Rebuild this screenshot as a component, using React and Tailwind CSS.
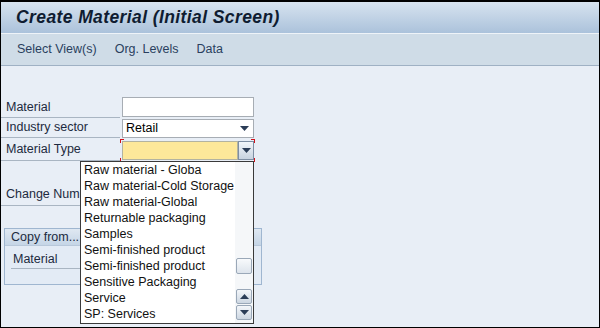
import React from 'react';

const font = { fontFamily: '"Liberation Sans", Arial, sans-serif' };

const Arrow = ({ up = false }) => (
  <svg width="9" height="5" viewBox="0 0 9 5" className={up ? 'rotate-180' : ''}>
    <path d="M0 0 H9 L4.5 5 Z" fill="#2b3d57" />
  </svg>
);

const Label = ({ children, className = '' }) => (
  <div className={`flex items-center border-b border-[#a9b5c2] pl-[5px] text-[12.5px] text-[#1c2a40] ${className}`}>
    {children}
  </div>
);

const options = [
  'Raw material - Globa',
  'Raw material-Cold Storage',
  'Raw material-Global',
  'Returnable packaging',
  'Samples',
  'Semi-finished product',
  'Semi-finished product',
  'Sensitive Packaging',
  'Service',
  'SP: Services',
];

const ScrollBtn = ({ up }) => (
  <div className="flex h-[15px] w-[16px] items-center justify-center rounded-[2px] border border-[#9aa8b8] bg-gradient-to-b from-[#f4f7fa] to-[#cdd7e2]">
    <Arrow up={up} />
  </div>
);

export default function App() {
  return (
    <div className="relative h-[328px] w-[600px] overflow-hidden border border-t-2 border-black bg-[#e8eef6]" style={font}>
      {/* title */}
      <div className="flex h-[31px] items-center bg-gradient-to-b from-[#d7e3ef] to-[#abc2db] pl-[15px]">
        <span className="text-[17.5px] font-bold italic tracking-[0.4px] text-[#0f1c31]">Create Material (Initial Screen)</span>
      </div>
      <div className="h-px bg-[#eef3f8]" />
      {/* toolbar */}
      <div className="flex h-[32px] items-center gap-[18px] border-b border-[#9fb1c4] bg-[#cfdce7] pl-[16px] text-[12.5px] text-[#2a3f5e]">
        <span>Select View(s)</span>
        <span>Org. Levels</span>
        <span>Data</span>
      </div>

      {/* form */}
      <div className="pt-[31px]">
        <div className="flex h-[21px]">
          <Label className="w-[119px]">Material</Label>
          <div className="ml-[2px] h-[20px] w-[132px] border border-[#a7adb4] bg-white" />
        </div>
        <div className="flex h-[20px]">
          <Label className="w-[119px]">Industry sector</Label>
          <div className="ml-[2px] mt-[1px] flex h-[19px] w-[132px] items-center justify-between border border-[#a7adb4] bg-white pl-[3px] pr-[4px] text-[12.5px] text-black">
            <span>Retail</span>
            <Arrow />
          </div>
        </div>
        <div className="flex h-[23px]">
          <Label className="w-[119px]">Material Type</Label>
          <div className="relative ml-[2px] mt-[3px] flex h-[19px] w-[132px]">
            <div className="flex-1 border border-[#b3b3a0] bg-[#fde89a]" />
            <div className="flex w-[16px] items-center justify-center border border-[#7d8ea3] bg-gradient-to-b from-[#f2f6fa] to-[#c7d3e0]">
              <Arrow />
            </div>
            <span className="absolute -left-[2px] -top-[2px] h-[4px] w-[4px] border-l border-t border-[#d0101a]" />
            <span className="absolute -right-[1px] -top-[2px] h-[4px] w-[4px] border-r border-t border-[#d0101a]" />
            <span className="absolute -bottom-[2px] -left-[2px] h-[4px] w-[4px] border-b border-l border-[#d0101a]" />
            <span className="absolute -bottom-[2px] -right-[1px] h-[4px] w-[4px] border-b border-r border-[#d0101a]" />
          </div>
        </div>
        <div className="mt-[23px] flex h-[22px]">
          <Label className="w-[119px]">Change Number</Label>
        </div>

        {/* copy from group */}
        <div className="ml-[3px] mt-[22px] h-[57px] w-[258px] border border-[#9fb6d0] bg-[#e3ebf5]">
          <div className="flex h-[17px] items-center border-b border-[#b8c8da] bg-gradient-to-b from-[#dfe8f2] to-[#c5d5e6] pl-[6px] text-[12.5px] text-[#1c2a40]">
            Copy from...
          </div>
          <div className="ml-[6px] mt-[5px] flex h-[18px] w-[70px] items-center border-b border-[#a9b5c2] pl-[2px] text-[12.5px] text-[#1c2a40]">
            Material
          </div>
        </div>
      </div>

      {/* dropdown list */}
      <div className="absolute left-[79px] top-[159px] flex h-[163px] w-[174px] border border-[#3a3a3a] bg-white">
        <div className="flex-1 pl-[3px] text-[12.5px] text-[#111]">
          {options.map((o, i) => (
            <div key={i} className="flex h-[16px] items-center whitespace-nowrap">{o}</div>
          ))}
        </div>
        <div className="flex w-[18px] flex-col items-center bg-[#f5f7f9] pt-[96px]">
          <div className="h-[16px] w-[16px] rounded-[2px] border border-[#9aa8b8] bg-gradient-to-b from-[#f8fafc] to-[#dde4ec]" />
          <div className="mt-[15px] flex flex-col gap-[1px]">
            <ScrollBtn up />
            <ScrollBtn />
          </div>
        </div>
      </div>
    </div>
  );
}
